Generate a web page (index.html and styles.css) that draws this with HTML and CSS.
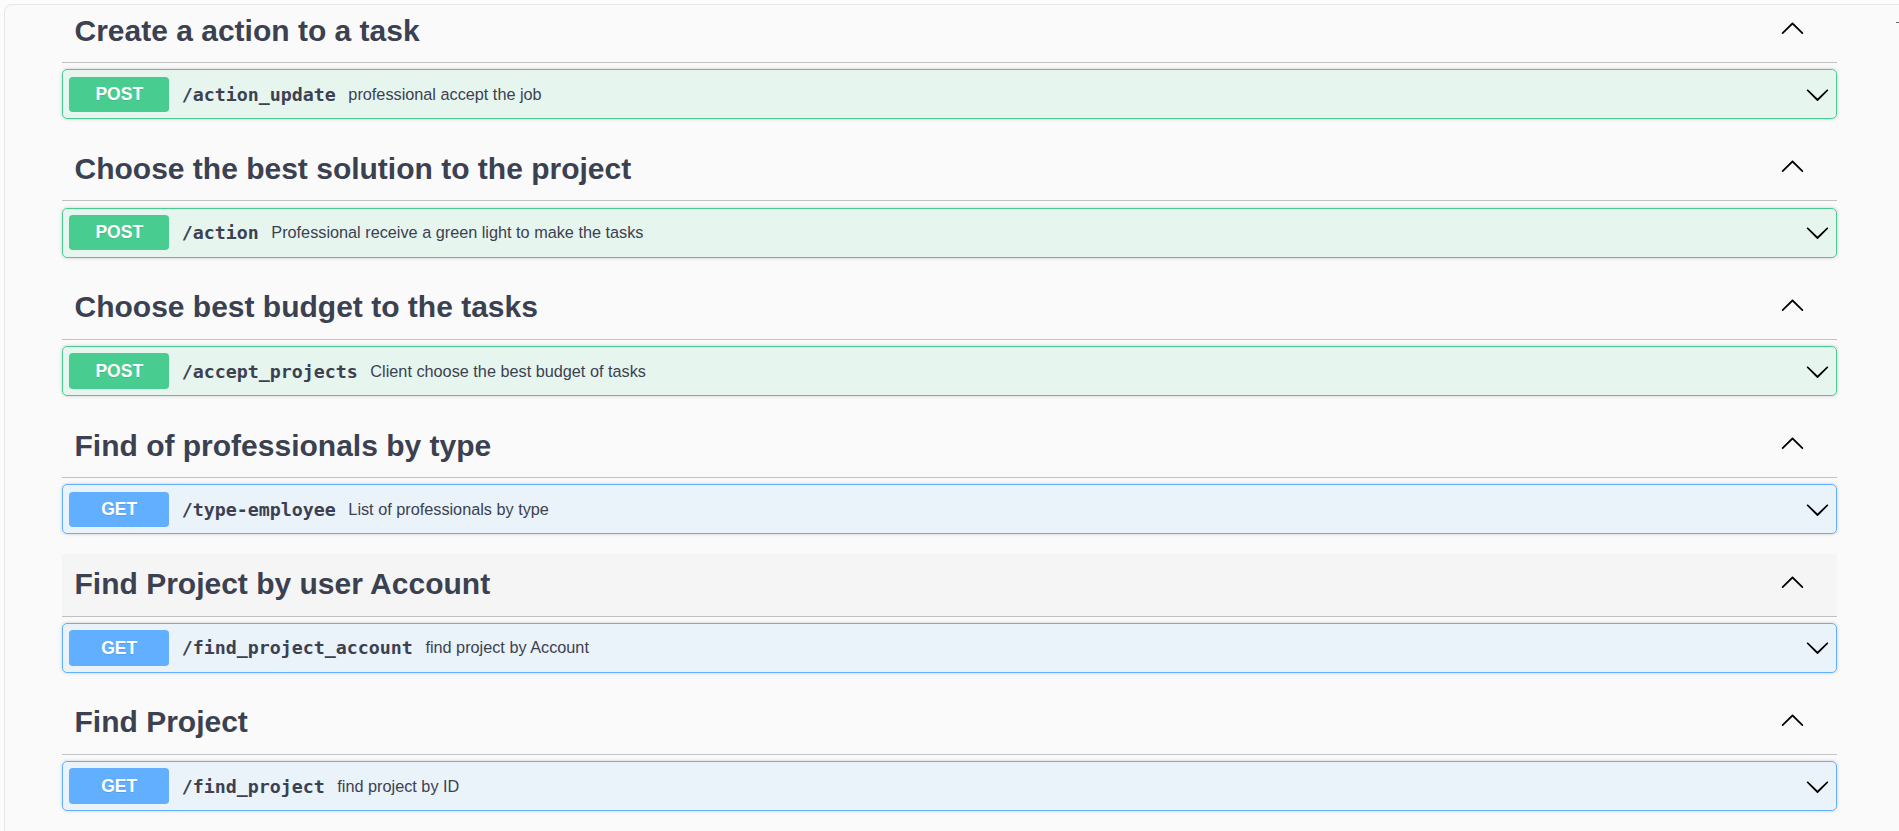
FILE: index.html
```html
<!DOCTYPE html>
<html lang="en">
<head>
<meta charset="utf-8">
<title>API</title>
<link rel="stylesheet" href="styles.css">
</head>
<body>
<div class="frame">
  <div class="wrapper">

    <section class="tag-section">
      <h3 class="opblock-tag"><span class="tag-name">Create a action to a task</span><button class="expand"><svg width="25" height="25" viewBox="0 0 20 20"><path d="M17.418 14.908c.272.268.709.268.979 0s.271-.701 0-.969l-7.908-7.83c-.27-.268-.707-.268-.979 0l-7.908 7.83c-.27.268-.27.701 0 .969.271.268.709.268.979 0L10 7.767l7.418 7.141z"/></svg></button></h3>
      <div class="opblock post">
        <div class="summary"><span class="method">POST</span><span class="path">/action_update</span><span class="desc">professional accept the job</span><svg class="arrow" width="25" height="25" viewBox="0 0 20 20"><path d="M17.418 6.109c.272-.268.709-.268.979 0s.271.701 0 .969l-7.908 7.83c-.27.268-.707.268-.979 0l-7.908-7.83c-.27-.268-.27-.701 0-.969.271-.268.709-.268.979 0L10 13.25l7.418-7.141z"/></svg></div>
      </div>
    </section>

    <section class="tag-section">
      <h3 class="opblock-tag"><span class="tag-name">Choose the best solution to the project</span><button class="expand"><svg width="25" height="25" viewBox="0 0 20 20"><path d="M17.418 14.908c.272.268.709.268.979 0s.271-.701 0-.969l-7.908-7.83c-.27-.268-.707-.268-.979 0l-7.908 7.83c-.27.268-.27.701 0 .969.271.268.709.268.979 0L10 7.767l7.418 7.141z"/></svg></button></h3>
      <div class="opblock post">
        <div class="summary"><span class="method">POST</span><span class="path">/action</span><span class="desc">Professional receive a green light to make the tasks</span><svg class="arrow" width="25" height="25" viewBox="0 0 20 20"><path d="M17.418 6.109c.272-.268.709-.268.979 0s.271.701 0 .969l-7.908 7.83c-.27.268-.707.268-.979 0l-7.908-7.83c-.27-.268-.27-.701 0-.969.271-.268.709-.268.979 0L10 13.25l7.418-7.141z"/></svg></div>
      </div>
    </section>

    <section class="tag-section">
      <h3 class="opblock-tag"><span class="tag-name">Choose best budget to the tasks</span><button class="expand"><svg width="25" height="25" viewBox="0 0 20 20"><path d="M17.418 14.908c.272.268.709.268.979 0s.271-.701 0-.969l-7.908-7.83c-.27-.268-.707-.268-.979 0l-7.908 7.83c-.27.268-.27.701 0 .969.271.268.709.268.979 0L10 7.767l7.418 7.141z"/></svg></button></h3>
      <div class="opblock post">
        <div class="summary"><span class="method">POST</span><span class="path">/accept_projects</span><span class="desc">Client choose the best budget of tasks</span><svg class="arrow" width="25" height="25" viewBox="0 0 20 20"><path d="M17.418 6.109c.272-.268.709-.268.979 0s.271.701 0 .969l-7.908 7.83c-.27.268-.707.268-.979 0l-7.908-7.83c-.27-.268-.27-.701 0-.969.271-.268.709-.268.979 0L10 13.25l7.418-7.141z"/></svg></div>
      </div>
    </section>

    <section class="tag-section">
      <h3 class="opblock-tag"><span class="tag-name">Find of professionals by type</span><button class="expand"><svg width="25" height="25" viewBox="0 0 20 20"><path d="M17.418 14.908c.272.268.709.268.979 0s.271-.701 0-.969l-7.908-7.83c-.27-.268-.707-.268-.979 0l-7.908 7.83c-.27.268-.27.701 0 .969.271.268.709.268.979 0L10 7.767l7.418 7.141z"/></svg></button></h3>
      <div class="opblock get">
        <div class="summary"><span class="method">GET</span><span class="path">/type-employee</span><span class="desc">List of professionals by type</span><svg class="arrow" width="25" height="25" viewBox="0 0 20 20"><path d="M17.418 6.109c.272-.268.709-.268.979 0s.271.701 0 .969l-7.908 7.83c-.27.268-.707.268-.979 0l-7.908-7.83c-.27-.268-.27-.701 0-.969.271-.268.709-.268.979 0L10 13.25l7.418-7.141z"/></svg></div>
      </div>
    </section>

    <section class="tag-section">
      <h3 class="opblock-tag hovered"><span class="tag-name">Find Project by user Account</span><button class="expand"><svg width="25" height="25" viewBox="0 0 20 20"><path d="M17.418 14.908c.272.268.709.268.979 0s.271-.701 0-.969l-7.908-7.83c-.27-.268-.707-.268-.979 0l-7.908 7.83c-.27.268-.27.701 0 .969.271.268.709.268.979 0L10 7.767l7.418 7.141z"/></svg></button></h3>
      <div class="opblock get">
        <div class="summary"><span class="method">GET</span><span class="path">/find_project_account</span><span class="desc">find project by Account</span><svg class="arrow" width="25" height="25" viewBox="0 0 20 20"><path d="M17.418 6.109c.272-.268.709-.268.979 0s.271.701 0 .969l-7.908 7.83c-.27.268-.707.268-.979 0l-7.908-7.83c-.27-.268-.27-.701 0-.969.271-.268.709-.268.979 0L10 13.25l7.418-7.141z"/></svg></div>
      </div>
    </section>

    <section class="tag-section">
      <h3 class="opblock-tag"><span class="tag-name">Find Project</span><button class="expand"><svg width="25" height="25" viewBox="0 0 20 20"><path d="M17.418 14.908c.272.268.709.268.979 0s.271-.701 0-.969l-7.908-7.83c-.27-.268-.707-.268-.979 0l-7.908 7.83c-.27.268-.27.701 0 .969.271.268.709.268.979 0L10 7.767l7.418 7.141z"/></svg></button></h3>
      <div class="opblock get">
        <div class="summary"><span class="method">GET</span><span class="path">/find_project</span><span class="desc">find project by ID</span><svg class="arrow" width="25" height="25" viewBox="0 0 20 20"><path d="M17.418 6.109c.272-.268.709-.268.979 0s.271.701 0 .969l-7.908 7.83c-.27.268-.707.268-.979 0l-7.908-7.83c-.27-.268-.27-.701 0-.969.271-.268.709-.268.979 0L10 13.25l7.418-7.141z"/></svg></div>
      </div>
    </section>

  </div>
</div>
<span class="edge-mark"></span>
</body>
</html>
```

FILE: styles.css
```css
html, body {
  margin: 0;
  padding: 0;
  height: 100%;
  overflow: hidden;
}

body {
  background: #fcfcfc;
  font-family: "Liberation Sans", Arial, sans-serif;
  color: #3b4151;
}

.frame {
  margin: 4px 0 0 4px;
  width: calc(100% + 20px);
  height: calc(100vh - 4px);
  overflow: hidden;
  background: #fafafa;
  border-top: 1px solid #e6e6e6;
  border-left: 1px solid #e6e6e6;
  border-top-left-radius: 8px;
  box-sizing: border-box;
}

.wrapper {
  margin: -5px 0 0 57px;
  width: 1775px;
}

.tag-section {
  display: flex;
  flex-direction: column;
}

.opblock-tag {
  display: flex;
  align-items: flex-start;
  margin: 0 0 6.25px;
  padding: 11.5px 25px 12.5px 12.5px;
  height: 38px;
  border-bottom: 1px solid rgba(59, 65, 81, 0.3);
  font-family: "Liberation Sans", Arial, sans-serif;
  font-size: 30px;
  font-weight: 700;
  line-height: 38px;
  color: #3b4151;
}

.opblock-tag.hovered {
  background: rgba(0, 0, 0, 0.02);
}

.tag-name {
  flex: 1 1 auto;
}

.expand {
  margin-top: 3.5px;
  padding: 0 7.5px;
  border: none;
  background: none;
  display: block;
  line-height: 0;
}

.expand svg,
.arrow {
  display: block;
  fill: #000;
}

.opblock {
  margin: 0 0 19.15px;
  border: 1px solid #000;
  border-radius: 5px;
  box-shadow: 0 0 3.75px rgba(0, 0, 0, 0.19);
}

.opblock.post {
  background: rgba(73, 204, 144, 0.1);
  border-color: #49cc90;
}

.opblock.get {
  background: rgba(97, 175, 254, 0.1);
  border-color: #61affe;
}

.summary {
  display: flex;
  align-items: center;
  padding: 6.25px;
}

.method {
  min-width: 100px;
  padding: 7.5px 0;
  border-radius: 3.75px;
  background: #000;
  color: #fff;
  font-family: "Liberation Sans", Arial, sans-serif;
  font-size: 17.5px;
  font-weight: 700;
  line-height: 20.5px;
  text-align: center;
  text-shadow: 0 1.25px 0 rgba(0, 0, 0, 0.1);
}

.post .method {
  background: #49cc90;
}

.get .method {
  background: #61affe;
}

.path {
  padding: 0 12.5px;
  font-family: "DejaVu Sans Mono", "Liberation Mono", monospace;
  font-size: 18.3px;
  font-weight: 700;
  color: #3b4151;
}

.desc {
  flex: 1 1 auto;
  font-family: "Liberation Sans", Arial, sans-serif;
  font-size: 16.25px;
  color: #3b4151;
}

.arrow {
  flex: 0 0 auto;
}

.edge-mark {
  position: absolute;
  top: 22px;
  left: 1896px;
  width: 3px;
  height: 1px;
  background: #666;
}
```
